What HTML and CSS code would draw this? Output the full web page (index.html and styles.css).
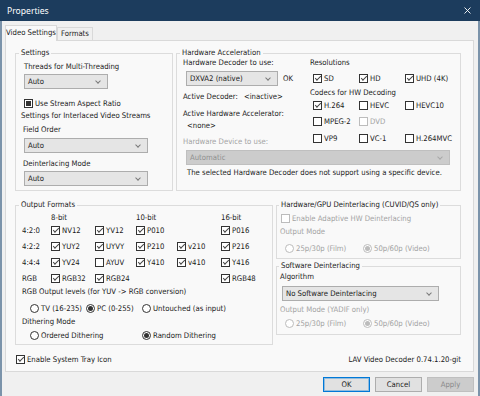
FILE: index.html
```html
<!DOCTYPE html>
<html lang="en">

<head>
    <meta charset="UTF-8">
    <title>Properties</title>
    <link rel="stylesheet" href="styles.css">
</head>

<body>
    <div class="window">
        <!-- Barra de titulo -->
        <div class="titlebar">
            <span class="title">Properties</span>
            <span class="close">
                <svg width="7" height="7" viewBox="0 0 7 7">
                    <path d="M0.5 0.5 L6.5 6.5 M6.5 0.5 L0.5 6.5" stroke="#fff" stroke-width="0.9" fill="none" />
                </svg>
            </span>
        </div>

        <div class="client">
            <div class="tabs">
                <div class="tab active">Video Settings</div>
                <div class="tab">Formats</div>
            </div>

            <div class="page">
                <div class="row-top">
                    <fieldset class="group">
                        <legend>Settings</legend>
                        <div class="line ml5 mt4">Threads for Multi-Threading</div>
                        <div class="combo ml5 mt2 w84"><span>Auto</span></div>
                        <label class="chk ml5 mt9"><span class="cb mixed"></span>Use Stream Aspect Ratio</label>
                        <div class="line ml2 mt3">Settings for Interlaced Video Streams</div>
                        <div class="line ml4 mt4">Field Order</div>
                        <div class="combo ml5 mt3 w124"><span>Auto</span></div>
                        <div class="line ml4 mt6">Deinterlacing Mode</div>
                        <div class="combo ml5 mt2 w124"><span>Auto</span></div>
                    </fieldset>

                    <fieldset class="group">
                        <legend>Hardware Acceleration</legend>
                        <div class="hw-top">
                            <div>
                                <div class="line ml3">Hardware Decoder to use:</div>
                                <div class="decoder ml6 mt3">
                                    <div class="combo w92"><span>DXVA2 (native)</span></div>
                                    <span>OK</span>
                                </div>
                                <div class="line ml3 mt6"><span class="key">Active Decoder:</span>&lt;inactive&gt;</div>
                                <div class="line ml3 mt7">Active Hardware Accelerator:</div>
                                <div class="line ml7 mt2">&lt;none&gt;</div>
                                <div class="line ml3 mt6 dim">Hardware Device to use:</div>
                            </div>
                            <div>
                                <div class="line">Resolutions</div>
                                <div class="cgrid ml3 mt5">
                                    <label class="chk"><span class="cb on"></span>SD</label>
                                    <label class="chk"><span class="cb on"></span>HD</label>
                                    <label class="chk"><span class="cb on"></span>UHD (4K)</label>
                                </div>
                                <div class="line mt5">Codecs for HW Decoding</div>
                                <div class="cgrid ml3 mt2">
                                    <label class="chk"><span class="cb on"></span>H.264</label>
                                    <label class="chk"><span class="cb"></span>HEVC</label>
                                    <label class="chk"><span class="cb"></span>HEVC10</label>
                                </div>
                                <div class="cgrid ml3 mt6">
                                    <label class="chk"><span class="cb"></span>MPEG-2</label>
                                    <label class="chk dim"><span class="cb dis"></span>DVD</label>
                                </div>
                                <div class="cgrid ml3 mt7">
                                    <label class="chk"><span class="cb"></span>VP9</label>
                                    <label class="chk"><span class="cb"></span>VC-1</label>
                                    <label class="chk"><span class="cb"></span>H.264MVC</label>
                                </div>
                            </div>
                        </div>
                        <div class="combo dis ml6 mt3 w264"><span>Automatic</span></div>
                        <div class="line ml7 mt3">The selected Hardware Decoder does not support using a specific device.</div>
                    </fieldset>
                </div>

                <div class="row-bottom">
                    <fieldset class="group output">
                        <legend>Output Formats</legend>
                        <div class="fmt-grid mt2">
                            <span></span><span>8-bit</span><span></span><span>10-bit</span><span></span><span>16-bit</span>

                            <span class="fmt">4:2:0</span>
                            <label class="chk"><span class="cb on"></span>NV12</label>
                            <label class="chk"><span class="cb on"></span>YV12</label>
                            <label class="chk"><span class="cb on"></span>P010</label>
                            <span></span>
                            <label class="chk"><span class="cb on"></span>P016</label>

                            <span class="fmt">4:2:2</span>
                            <label class="chk"><span class="cb on"></span>YUY2</label>
                            <label class="chk"><span class="cb on"></span>UYVY</label>
                            <label class="chk"><span class="cb on"></span>P210</label>
                            <label class="chk"><span class="cb on"></span>v210</label>
                            <label class="chk"><span class="cb on"></span>P216</label>

                            <span class="fmt">4:4:4</span>
                            <label class="chk"><span class="cb on"></span>YV24</label>
                            <label class="chk"><span class="cb"></span>AYUV</label>
                            <label class="chk"><span class="cb on"></span>Y410</label>
                            <label class="chk"><span class="cb on"></span>v410</label>
                            <label class="chk"><span class="cb on"></span>Y416</label>

                            <span class="fmt">RGB</span>
                            <label class="chk"><span class="cb on"></span>RGB32</label>
                            <label class="chk"><span class="cb on"></span>RGB24</label>
                            <span></span>
                            <span></span>
                            <label class="chk"><span class="cb on"></span>RGB48</label>
                        </div>
                        <div class="line ml3 mt1">RGB Output levels (for YUV -&gt; RGB conversion)</div>
                        <div class="levels ml11 mt6">
                            <label class="chk"><span class="rb"></span>TV (16-235)</label>
                            <label class="chk"><span class="rb on"></span>PC (0-255)</label>
                            <label class="chk"><span class="rb"></span>Untouched (as input)</label>
                        </div>
                        <div class="line ml3 mt4">Dithering Mode</div>
                        <div class="dither ml11 mt3">
                            <label class="chk"><span class="rb"></span>Ordered Dithering</label>
                            <label class="chk"><span class="rb on"></span>Random Dithering</label>
                        </div>
                    </fieldset>

                    <div class="stack">
                        <fieldset class="group side hw-deint">
                            <legend>Hardware/GPU Deinterlacing (CUVID/QS only)</legend>
                            <label class="chk dim ml1 mt3"><span class="cb dis"></span>Enable Adaptive HW Deinterlacing</label>
                            <div class="line dim mt4">Output Mode</div>
                            <div class="modes ml5 mt6">
                                <label class="chk dim"><span class="rb dis"></span>25p/30p (Film)</label>
                                <label class="chk dim"><span class="rb dis on"></span>50p/60p (Video)</label>
                            </div>
                        </fieldset>
                        <fieldset class="group side sw-deint">
                            <legend>Software Deinterlacing</legend>
                            <div class="line mt1">Algorithm</div>
                            <div class="combo ml2 mt4 w157"><span>No Software Deinterlacing</span></div>
                            <div class="line dim mt4">Output Mode (YADIF only)</div>
                            <div class="modes ml5 mt3">
                                <label class="chk dim"><span class="rb dis"></span>25p/30p (Film)</label>
                                <label class="chk dim"><span class="rb dis on"></span>50p/60p (Video)</label>
                            </div>
                        </fieldset>
                    </div>
                </div>

                <div class="footer">
                    <label class="chk ml1"><span class="cb on"></span>Enable System Tray Icon</label>
                    <span>LAV Video Decoder 0.74.1.20-git</span>
                </div>
            </div>

            <div class="buttons">
                <button class="btn default">OK</button>
                <button class="btn">Cancel</button>
                <button class="btn" disabled>Apply</button>
            </div>
        </div>
    </div>
</body>

</html>
```

FILE: styles.css
```css
* {
    box-sizing: border-box;
}

body {
    margin: 0;
    font-family: "DejaVu Sans Condensed", "Liberation Sans", sans-serif;
    font-size: 7.7px;
    color: #1a1a1a;
    background-color: #f0f0f0;
}

.window {
    width: 480px;
    height: 396px;
    display: flex;
    flex-direction: column;
    overflow: hidden;
}

/* Barra de titulo */
.titlebar {
    height: 21px;
    flex: none;
    display: flex;
    align-items: center;
    justify-content: space-between;
    padding-left: 7px;
    background-color: #1c3c5d;
    color: #fff;
}

.title {
    font-family: "Noto Sans", "Liberation Sans", sans-serif;
    font-size: 8.6px;
}

.close {
    width: 26px;
    height: 21px;
    display: flex;
    align-items: center;
    justify-content: center;
}

.client {
    flex: 1;
    display: flex;
    flex-direction: column;
    padding: 4px 4px 0 3px;
    border-left: 2px solid #7b93aa;
    border-right: 2px solid #7b93aa;
}

/* Pestañas */
.tabs {
    height: 15px;
    display: flex;
    align-items: flex-end;
    position: relative;
    z-index: 1;
}

.tab {
    height: 13px;
    line-height: 12px;
    padding: 0 3px;
    border: 1px solid #d9d9d9;
    border-bottom: none;
    background-color: #f0f0f0;
    white-space: nowrap;
}

.tab.active {
    width: 52px;
    height: 16px;
    line-height: 14px;
    padding: 0;
    margin-bottom: -1px;
    text-align: center;
    background-color: #f9f9f9;
}

.page {
    height: 332px;
    padding: 7px 0 0 9px;
    border: 1px solid #d9d9d9;
    background-color: #f9f9f9;
}

.row-top {
    display: grid;
    grid-template-columns: 158px 285px;
    grid-template-rows: 143px;
    column-gap: 3px;
}

.row-bottom {
    display: grid;
    grid-template-columns: 258px 185px;
    column-gap: 3px;
    margin-top: 9px;
}

.group {
    margin: 0;
    padding: 0 0 0 3px;
    min-width: 0;
    border: 1px solid #dcdcdc;
}

.group legend {
    padding: 0 2px;
    line-height: 10px;
    white-space: nowrap;
}

.group.side legend {
    margin-left: -1px;
}

.output {
    height: 145px;
}

.hw-deint {
    height: 59px;
}

.sw-deint {
    height: 74px;
    margin-top: 2px;
}

.line {
    height: 10px;
    line-height: 10px;
    white-space: nowrap;
}

.dim {
    color: #a3a3a3;
}

.key {
    margin-right: 6px;
}

/* Combos */
.combo {
    height: 15px;
    display: flex;
    align-items: center;
    justify-content: space-between;
    padding: 0 7px 0 3px;
    border: 1px solid #adadad;
    background-color: #e5e5e5;
    white-space: nowrap;
}

.combo::after {
    content: "";
    width: 3px;
    height: 3px;
    margin-top: -2px;
    border-right: 1px solid #7a7a7a;
    border-bottom: 1px solid #7a7a7a;
    transform: rotate(45deg);
}

.combo.dis {
    border-color: #bfbfbf;
    background-color: #cccccc;
    color: #8f8f8f;
}

.combo.dis::after {
    border-color: #a8a8a8;
}

.decoder {
    display: flex;
    align-items: center;
    gap: 5px;
}

/* Casillas y radios */
.chk {
    height: 10px;
    display: flex;
    align-items: center;
    gap: 2px;
    white-space: nowrap;
}

.cb,
.rb {
    width: 9px;
    height: 9px;
    flex: none;
    display: inline-flex;
    align-items: center;
    justify-content: center;
    border: 1px solid #333;
    background-color: #fff;
}

.rb {
    border-radius: 50%;
}

.cb.on::after {
    content: "";
    width: 5px;
    height: 2px;
    margin-top: -2px;
    border-left: 1px solid #444;
    border-bottom: 1px solid #444;
    transform: rotate(-45deg);
}

.cb.mixed::after {
    content: "";
    width: 5px;
    height: 5px;
    background-color: #333;
}

.rb.on::after {
    content: "";
    width: 5px;
    height: 5px;
    border-radius: 50%;
    background-color: #333;
}

.cb.dis,
.rb.dis {
    border-color: #bcbcbc;
}

.rb.dis.on::after {
    background-color: #bcbcbc;
}

.hw-top {
    display: grid;
    grid-template-columns: 130px 1fr;
}

.cgrid {
    display: grid;
    grid-template-columns: 46px 46px auto;
}

.fmt-grid {
    display: grid;
    grid-template-columns: 32px 44px 41px 41px 44px auto;
    grid-template-rows: 10px repeat(4, 16px);
    align-items: center;
    white-space: nowrap;
}

.fmt {
    padding-left: 3px;
}

.levels {
    display: grid;
    grid-template-columns: 56px 56px auto;
}

.dither {
    display: grid;
    grid-template-columns: 112px auto;
}

.modes {
    display: grid;
    grid-template-columns: 78px auto;
}

.footer {
    width: 446px;
    height: 10px;
    margin-top: 9px;
    display: flex;
    align-items: center;
    justify-content: space-between;
}

/* Botones */
.buttons {
    display: flex;
    justify-content: flex-end;
    gap: 5px;
    margin-top: 5px;
}

.btn {
    width: 47px;
    height: 15px;
    padding: 0;
    font: inherit;
    color: #1a1a1a;
    border: 1px solid #adadad;
    background-color: #e1e1e1;
}

.btn.default {
    border-color: #0078d7;
    box-shadow: inset 0 0 0 1px rgba(0, 120, 215, 0.35);
}

.btn:disabled {
    color: #8a8a8a;
    border-color: #bfbfbf;
    background-color: #cccccc;
}

/* Espaciado */
.ml1 { margin-left: 1px; }
.ml2 { margin-left: 2px; }
.ml3 { margin-left: 3px; }
.ml4 { margin-left: 4px; }
.ml5 { margin-left: 5px; }
.ml6 { margin-left: 6px; }
.ml7 { margin-left: 7px; }
.ml11 { margin-left: 11px; }
.mt1 { margin-top: 1px; }
.mt2 { margin-top: 2px; }
.mt3 { margin-top: 3px; }
.mt4 { margin-top: 4px; }
.mt5 { margin-top: 5px; }
.mt6 { margin-top: 6px; }
.mt7 { margin-top: 7px; }
.mt9 { margin-top: 9px; }

.w84 { width: 84px; }
.w92 { width: 92px; }
.w124 { width: 124px; }
.w157 { width: 157px; }
.w264 { width: 264px; }
```
